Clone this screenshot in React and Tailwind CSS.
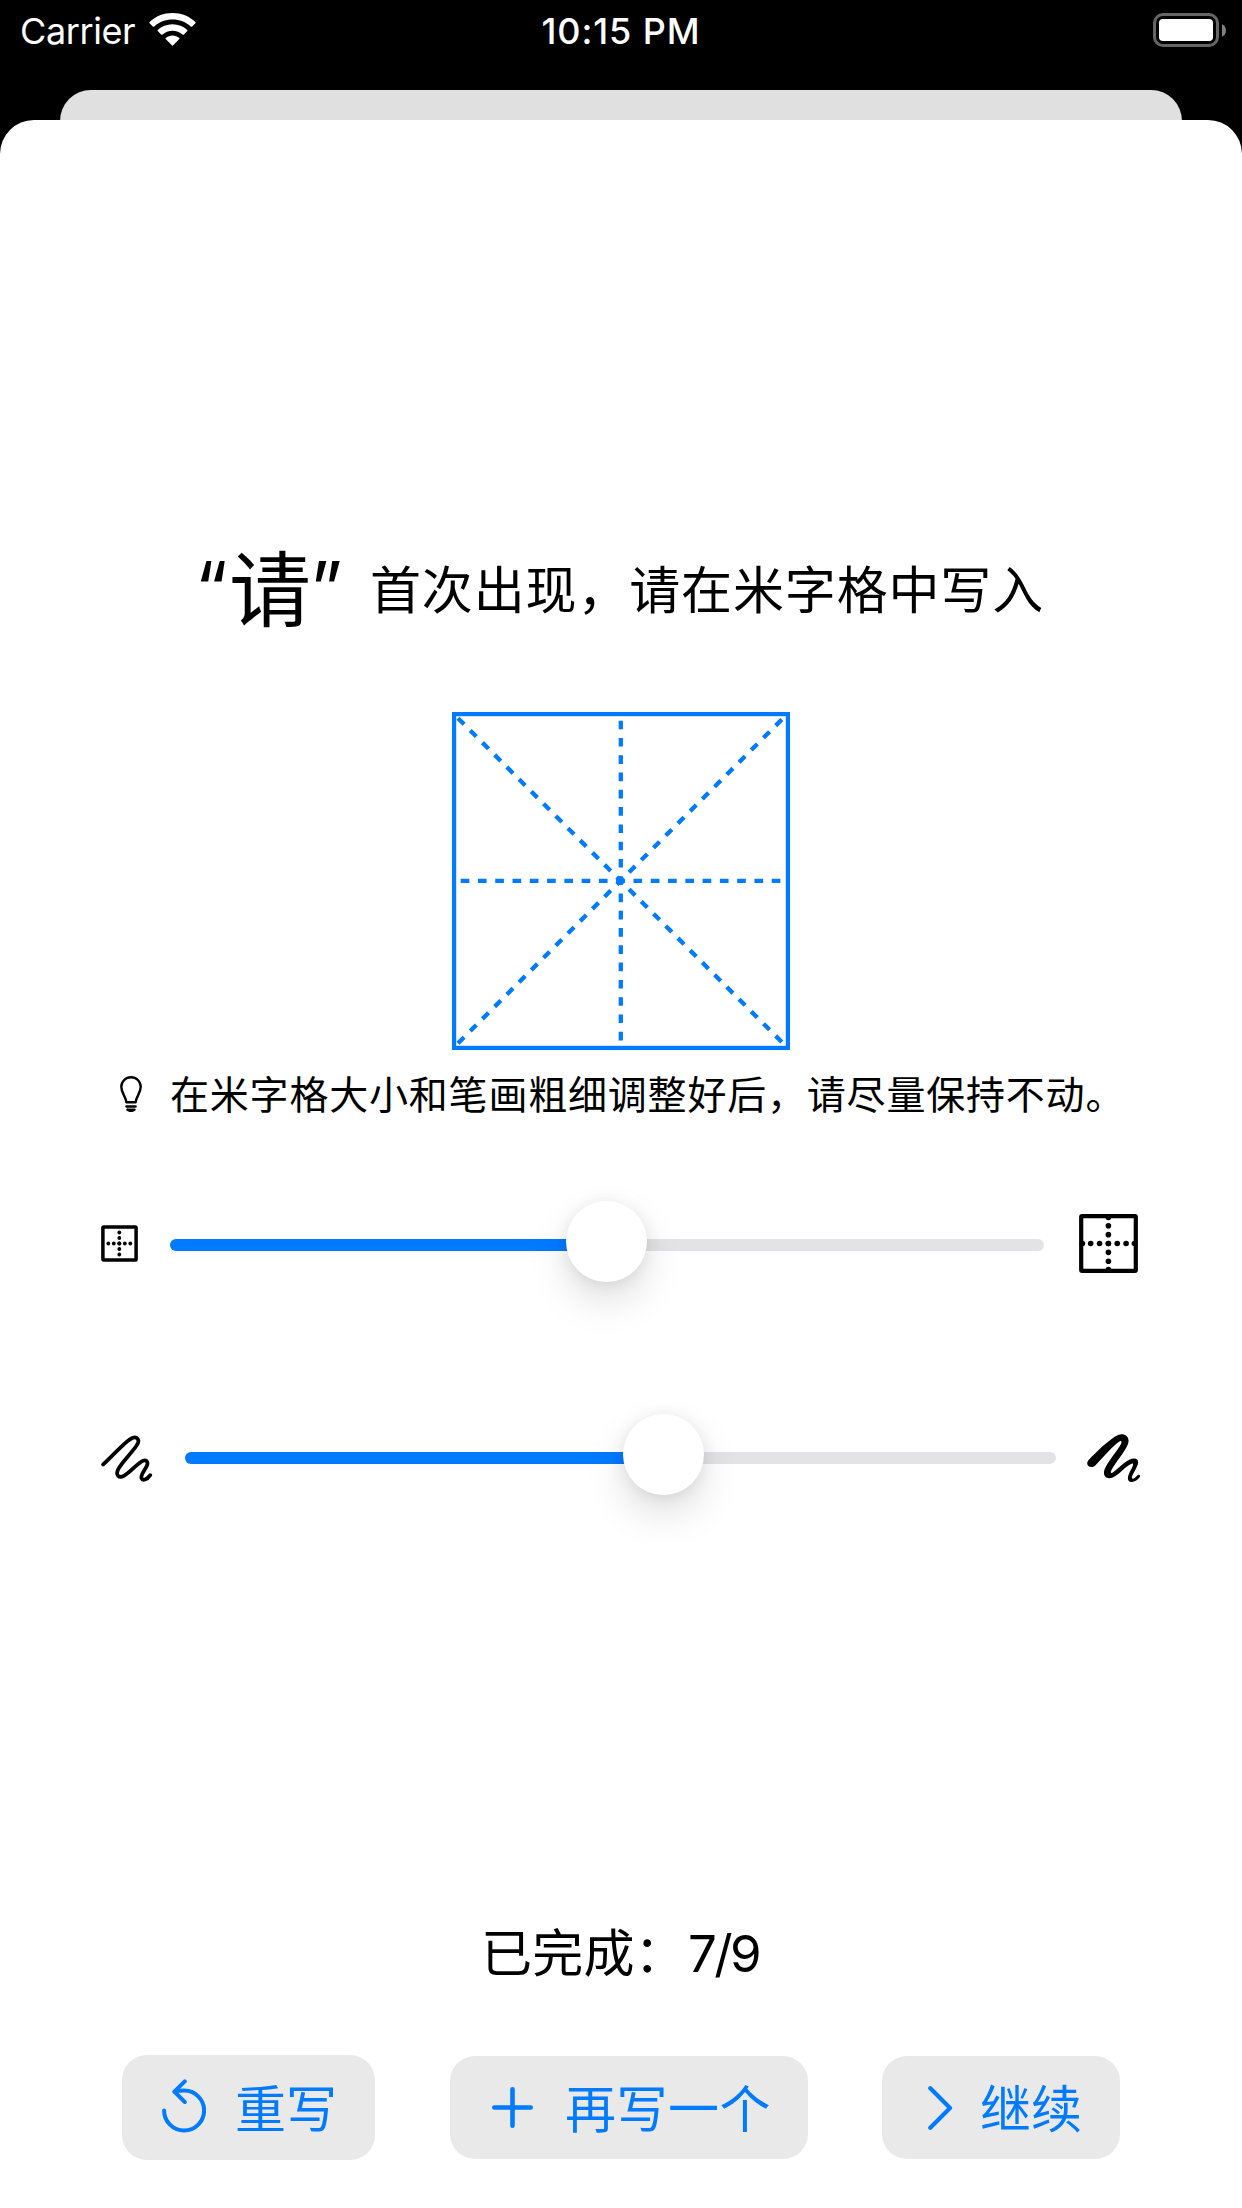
import React from "react";

const CJK = "font-['Noto_Sans_CJK_SC',sans-serif]";

function Wifi() {
  return (
    <svg className="h-[34px] w-[47px]" viewBox="0 0 47 34" fill="#fff">
      <path d="M23.5 0C32.3 0 40.4 3.3 46.4 8.900Q47 9.600 46.400 10.200L43.200 13.400Q42.400 14 41.700 13.400C36.800 9 30.500 6.600 23.500 6.600S10.200 9 5.300 13.400Q4.600 14 3.800 13.400L.6 10.200Q0 9.600 .6 8.900C6.600 3.300 14.700 0 23.500 0Z" />
      <path d="M23.500 11.200C29.200 11.200 34.400 13.300 38.300 16.900Q38.800 17.500 38.300 18.100L34.900 21.500Q34.200 22 33.500 21.500C30.800 19.100 27.300 17.700 23.500 17.700S16.200 19.100 13.500 21.500Q12.800 22 12.100 21.500L8.700 18.100Q8.200 17.500 8.700 16.900C12.600 13.300 17.800 11.200 23.500 11.200Z" />
      <path d="M23.500 22.400C26.100 22.400 28.500 23.300 30.300 24.900Q30.800 25.500 30.300 26.100L24.200 32.300Q23.500 33 22.800 32.300L16.700 26.100Q16.200 25.500 16.700 24.900C18.500 23.300 20.900 22.400 23.500 22.400Z" />
    </svg>
  );
}

function Battery() {
  return (
    <div className="flex items-center gap-[3px]">
      <div className="h-[34px] w-[66px] rounded-[10px] border-[3px] border-[#666] p-[3px]">
        <div className="h-full rounded-[4px] bg-white" />
      </div>
      <svg className="h-[13px] w-[4px]" viewBox="0 0 4 13" fill="#808080">
        <path d="M0 0.300C5.300 2.500 5.300 10.500 0 12.700Z" />
      </svg>
    </div>
  );
}

function StatusBar() {
  return (
    <div className="grid h-[90px] grid-cols-3 items-start px-[16px] pt-[13px] font-['Inter',sans-serif] text-[36px] leading-[36px] text-white">
      <div className="flex items-start pl-[4px]">
        <span className="w-[129px] tracking-[-0.400px]">Carrier</span>
        <Wifi />
      </div>
      <div className="text-center font-medium tracking-[0.900px]">10:15 PM</div>
      <div className="flex justify-end">
        <Battery />
      </div>
    </div>
  );
}

function RiceGrid() {
  const dash = { stroke: "#007aff", strokeWidth: 4.3, strokeDasharray: "8.64 8.64" };
  return (
    <svg className="h-[338px] w-[338px]" viewBox="0 0 338 338">
      <rect x="2.100" y="2.100" width="333.800" height="333.800" fill="none" stroke="#007aff" strokeWidth="4.200" />
      <line x1="8.700" y1="168.800" x2="329" y2="168.800" {...dash} />
      <line x1="168.800" y1="8.700" x2="168.800" y2="329" {...dash} />
      <line x1="6" y1="6.200" x2="331.500" y2="331.700" {...dash} />
      <line x1="6" y1="331.300" x2="331.500" y2="5.800" {...dash} />
      <circle cx="168.500" cy="168.800" r="4.300" fill="#007aff" />
    </svg>
  );
}

function Bulb() {
  return (
    <svg className="h-[36px] w-[22px]" viewBox="0 0 22 36" fill="none" stroke="#000" strokeWidth="2.400" strokeLinecap="round" strokeLinejoin="round">
      <path d="M6.300 26.200C6 20.500 1.300 17.500 1.300 10.700A9.700 9.500 0 0 1 20.700 10.700C20.700 17.500 16 20.500 15.700 26.200Z" />
      <path d="M6.500 30.500H15.500" />
      <path d="M7.500 33.800H14.500Q11 36 7.500 33.800" />
    </svg>
  );
}

function SmallGrid() {
  const dots = [-11, -5.5, 0, 5.500, 11];
  return (
    <svg className="h-[37px] w-[37px]" viewBox="0 0 37 37">
      <rect x="1.900" y="1.900" width="33.200" height="33.200" rx="0.800" fill="none" stroke="#000" strokeWidth="3.500" />
      {dots.map((d) => (
        <g key={d}>
          <circle cx={18.300 + d} cy="18.500" r="1.900" />
          <circle cx="18.300" cy={18.500 + d} r="1.900" />
        </g>
      ))}
    </svg>
  );
}

function LargeGrid() {
  const dots = [-26, -17.700, -8.850, 0, 8.850, 17.700, 26];
  return (
    <svg className="h-[59px] w-[59px]" viewBox="0 0 59 59">
      <rect x="2.200" y="2.200" width="54.600" height="54.600" rx="0.800" fill="none" stroke="#000" strokeWidth="4.200" />
      {dots.map((d) => (
        <g key={d}>
          <circle cx={29.400 + d} cy="29.500" r="2.800" />
          <circle cx="29.400" cy={29.500 + d} r="2.800" />
        </g>
      ))}
    </svg>
  );
}

function ThinScribble() {
  return (
    <svg className="h-[47px] w-[52px]" viewBox="0 0 52.500 47" fill="none" stroke="#000" strokeWidth="3.800" strokeLinecap="round" strokeLinejoin="round">
      <path d="M2.200 29.500C12 20.500 25 5.500 31.500 2.700C36.500 0.800 39.500 4.800 36.500 9.500C32 17 21 27 17.300 34.500C14.500 40.500 18 44 23.500 40.800C31 36.200 37 28 42.500 25.700C46.500 24.500 48 27.500 46 31.500C44 35.500 40 40 40.800 43.300C42 46.300 46.500 45 49.700 40.300" />
    </svg>
  );
}

function ThickScribble() {
  return (
    <svg className="h-[49px] w-[54px]" viewBox="0 0 54 49">
      <path d="M1.200 26.500C10 17 24 4 31 1C37.500 -1.500 43.500 3 41 10C38 18 28.500 28 24.500 36C23 39 24 40 26.500 38C33 33 39 26.500 45 24.800C50.500 23.500 52.500 27.500 50.200 32C48 37 44.500 42 45 44.300C46 45.500 48.500 43.500 50.200 41.500C51.500 40 53.800 41 52.800 43C50.500 46.300 46.500 48.900 43 47.700C39.500 46 41 41.500 43 37.500C44.500 34.500 46.500 31.500 46 29.500C42 29 35 38 27.500 42.500C21.500 46.300 15 43.500 17.500 35.500C20.500 27.500 30 17.500 34 10C35 7.500 34.500 6.300 32.500 7.500C26 11.500 17 22.500 8.300 31.500C3.500 35.500-2.200 31 1.200 26.500Z" />
    </svg>
  );
}

function Slider({ track, fill }) {
  return (
    <div className={"relative flex h-[81px] items-center " + track}>
      <div className="mt-[7px] h-3 w-full rounded-full bg-[#e3e3e5]">
        <div className={"h-3 rounded-l-full bg-[#007aff] " + fill} />
      </div>
      <div className={"absolute top-0 h-0 " + fill}>
        <div className="ml-auto -mr-[40.500px] h-[81px] w-[81px] rounded-full bg-white shadow-[0_18px_39px_rgba(0,0,0,0.13),0_2px_16px_rgba(0,0,0,0.08)]" />
      </div>
    </div>
  );
}

function Button({ className, children }) {
  return (
    <button className={"flex shrink-0 items-center rounded-[25px] bg-[#e9e9e9] text-[51px] leading-[60px] text-[#007aff] " + className}>
      {children}
    </button>
  );
}

function Reset() {
  return (
    <svg className="mt-[-2px] h-[54px] w-[44px]" viewBox="0 0 44 54" fill="none" stroke="#007aff" strokeWidth="4" strokeLinecap="round" strokeLinejoin="round">
      <path d="M2.100 31.500A20 20 0 1 0 22 11.500Q17 11.500 12.800 12.700" />
      <path d="M22.800 2.300L12.400 12.700L22.800 23" />
    </svg>
  );
}

export default function App() {
  return (
    <div className="h-[2208px] w-[1242px] overflow-hidden bg-black">
      <StatusBar />
      <div className="mx-[60px] h-[60px] rounded-t-[31px] bg-[#e0e0e0]" />
      <main className={"-mt-[30px] flex h-[2088px] w-full flex-col rounded-t-[34px] bg-white text-black " + CJK}>
        <h1 className="mt-[417px] flex h-[100px] items-center pl-[195px]">
          <span className="flex w-[175px] items-center font-normal">
            <span className="mt-[2px] w-[34px] font-['Inter',sans-serif] text-[74px] leading-[92px]">“</span>
            <span className="-mt-[4px] w-[81px] text-[82px] leading-[100px]">请</span>
            <span className="mt-[2px] font-['Inter',sans-serif] text-[74px] leading-[92px]">”</span>
          </span>
          <span className="whitespace-nowrap text-[51px] font-normal leading-[60px] tracking-[0.850px]">首次出现，请在米字格中写入</span>
        </h1>

        <div className="mt-[75px] flex justify-center">
          <RiceGrid />
        </div>

        <p className="mt-[21px] flex h-[46px] items-center gap-[28px] pl-[120px]">
          <Bulb />
          <span className="-mt-[5px] whitespace-nowrap text-[39px] leading-[46px] tracking-[0.800px]">在米字格大小和笔画粗细调整好后，请尽量保持不动。</span>
        </p>

        <div className="mt-[84px] flex h-[81px] items-center pl-[101px]">
          <div className="mt-[4px]"><SmallGrid /></div>
          <div className="ml-[32px]">
            <Slider track="w-[874px]" fill="w-[436.500px]" />
          </div>
          <div className="ml-[35px] mt-[4px]"><LargeGrid /></div>
        </div>

        <div className="mt-[132px] flex h-[81px] items-center pl-[101px]">
          <div className="mt-[7px]"><ThinScribble /></div>
          <div className="ml-[32px]">
            <Slider track="w-[871px]" fill="w-[478.500px]" />
          </div>
          <div className="ml-[31px] mt-[7px]"><ThickScribble /></div>
        </div>

        <p className="mt-[425px] flex h-[60px] items-center pl-[481px] text-[51px] leading-[60px]">
          <span className="w-[207px] whitespace-nowrap tracking-[0.200px]">已完成：</span>
          <span className="mt-[7px] font-['Inter',sans-serif] tracking-[-2.600px]">7/9</span>
        </p>

        <div className="mt-[74px] flex h-[106px] items-center pl-[122px]">
          <Button className="h-[105px] w-[253px] gap-[29px] pl-[40px]">
            <Reset />
            <span className="-mt-[3px]">重写</span>
          </Button>
          <Button className="ml-[75px] h-[103px] w-[358px] gap-[32px] pl-[42px]">
            <svg className="mt-[1px] h-[41px] w-[41px]" viewBox="0 0 41 41" stroke="#007aff" strokeWidth="4.600" strokeLinecap="round">
              <path d="M20.500 2.300V38.700M2.300 20.500H38.700" />
            </svg>
            <span className="-mt-[3px] tracking-[0.500px]">再写一个</span>
          </Button>
          <Button className="ml-[74px] h-[103px] w-[238px] gap-[27px] pl-[46px]">
            <svg className="mt-[1px] h-[44px] w-[25px]" viewBox="0 0 25 44" fill="none" stroke="#007aff" strokeWidth="4.200" strokeLinecap="round" strokeLinejoin="round">
              <path d="M2.300 2.300L22 22L2.300 41.700" />
            </svg>
            <span className="-mt-[3px]">继续</span>
          </Button>
        </div>
      </main>
    </div>
  );
}
